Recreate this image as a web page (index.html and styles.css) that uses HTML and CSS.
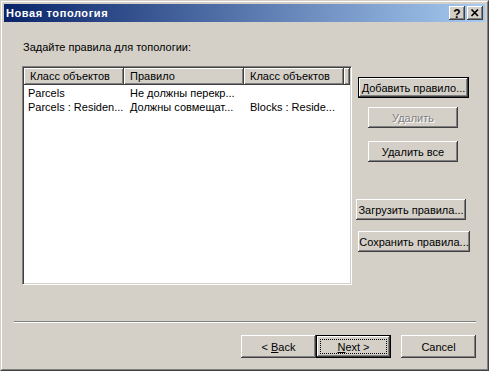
FILE: index.html
```html
<!DOCTYPE html>
<html lang="ru">
<head>
<meta charset="utf-8">
<title>Новая топология</title>
<link rel="stylesheet" href="styles.css">
</head>
<body>
<div class="window">
  <div class="frame">
    <div class="titlebar">
      <span class="title">Новая топология</span>
      <span class="capbtn help">?</span>
      <span class="capbtn close"><svg width="16" height="14" viewBox="0 0 16 14"><path d="M4.5 3.5 L11 10 M11 3.5 L4.5 10" stroke="#000" stroke-width="1.7" fill="none"/></svg></span>
    </div>
    <div class="client">
      <div class="label">Задайте правила для топологии:</div>
      <div class="main">
        <div class="listview">
          <div class="lv-header">
            <div class="hcell c1">Класс объектов</div>
            <div class="hcell c2">Правило</div>
            <div class="hcell c3">Класс объектов</div>
            <div class="hcell filler"></div>
          </div>
          <div class="lv-row">
            <div class="cell c1 first">Parcels</div>
            <div class="cell c2">Не должны перекр...</div>
            <div class="cell c3"></div>
          </div>
          <div class="lv-row">
            <div class="cell c1 first">Parcels : Residen...</div>
            <div class="cell c2">Должны совмещат...</div>
            <div class="cell c3">Blocks : Reside...</div>
          </div>
        </div>
        <div class="side">
          <div class="btn default b-add">Добавить правило...</div>
          <div class="btn disabled b-del">Удалить</div>
          <div class="btn b-delall">Удалить все</div>
          <div class="btn b-load">Загрузить правила...</div>
          <div class="btn b-save">Сохранить правила...</div>
        </div>
      </div>
      <div class="separator"></div>
      <div class="footer">
        <div class="btn wiz"><span>&lt;&nbsp;<u>B</u>ack</span></div>
        <div class="btn wiz default focus"><span class="focusrect"><span><u>N</u>ext&nbsp;&gt;</span></span></div>
        <div class="btn wiz cancel"><span>Cancel</span></div>
      </div>
    </div>
  </div>
</div>
</body>
</html>
```

FILE: styles.css
```css
html, body {
  margin: 0;
  padding: 0;
  background: #d4d0c8;
}

body {
  font-family: "Liberation Sans", Arial, sans-serif;
  font-size: 11px;
  color: #000;
}

.window {
  width: 489px;
  height: 371px;
  box-sizing: border-box;
  border: 1px solid;
  border-color: #d4d0c8 #404040 #404040 #d4d0c8;
  background: #d4d0c8;
  display: flex;
  flex-direction: column;
}

.frame {
  flex: 1;
  border: 1px solid;
  border-color: #ffffff #808080 #808080 #ffffff;
  padding: 2px;
  display: flex;
  flex-direction: column;
}

.titlebar {
  height: 18px;
  flex: none;
  background: linear-gradient(to right, #0a246a, #a6caf0);
  display: flex;
  align-items: flex-start;
  padding: 0 2px 0 2px;
}

.title {
  flex: 1;
  color: #fff;
  font-weight: bold;
  font-size: 11px;
  line-height: 18px;
  letter-spacing: 0.6px;
}

.capbtn {
  width: 16px;
  height: 14px;
  margin-top: 2px;
  box-sizing: border-box;
  background: #d4d0c8;
  box-shadow: inset -1px -1px #404040, inset 1px 1px #ffffff, inset -2px -2px #808080;
  display: flex;
  align-items: center;
  justify-content: center;
}

.capbtn.help {
  margin-right: 2px;
  font-weight: bold;
  font-size: 12px;
  line-height: 14px;
  padding-top: 1px;
}

.capbtn svg {
  display: block;
}

.client {
  flex: 1;
  margin-top: 1px;
  display: flex;
  flex-direction: column;
}

.label {
  margin: 18px 0 0 19px;
  height: 13px;
  line-height: 13px;
}

.main {
  margin-top: 12px;
  height: 219px;
  display: flex;
  flex: none;
}

.listview {
  margin-left: 18px;
  width: 330px;
  height: 219px;
  box-sizing: border-box;
  background: #fff;
  border: 1px solid;
  border-color: #808080 #ffffff #ffffff #808080;
  box-shadow: inset 1px 1px #404040, inset -1px -1px #d4d0c8;
  padding: 1px;
  overflow: hidden;
}

.lv-header {
  display: flex;
  height: 17px;
  background: #d4d0c8;
}

.hcell {
  box-sizing: border-box;
  height: 17px;
  line-height: 16px;
  padding-left: 6px;
  box-shadow: inset -1px -1px #404040, inset 1px 1px #ffffff, inset -2px -2px #808080;
  white-space: nowrap;
  overflow: hidden;
}

.c1 { width: 100px; }
.c2 { width: 120px; }
.c3 { width: 100px; }
.hcell.filler { flex: 1; }

.lv-row {
  display: flex;
  height: 14px;
  line-height: 14px;
}

.lv-header + .lv-row {
  margin-top: 1px;
}

.cell {
  box-sizing: border-box;
  padding-left: 6px;
  white-space: nowrap;
  overflow: hidden;
}

.cell.first {
  padding-left: 4px;
}

.side {
  display: flex;
  flex-direction: column;
  align-items: flex-start;
}

.btn {
  box-sizing: border-box;
  height: 21px;
  background: #d4d0c8;
  box-shadow: inset -1px -1px #404040, inset 1px 1px #ffffff, inset -2px -2px #808080;
  display: flex;
  align-items: center;
  justify-content: center;
  white-space: nowrap;
}

.btn.default {
  border: 1px solid #000;
}

.btn.disabled {
  color: #808080;
  text-shadow: 1px 1px #ffffff;
}

.b-add { margin: 11px 0 0 6px; width: 111px; }
.b-del { margin: 9px 0 0 16px; width: 90px; }
.b-delall { margin: 13px 0 0 16px; width: 90px; }
.b-load { margin: 37px 0 0 4px; width: 110px; }
.b-save { margin: 11px 0 0 6px; width: 112px; }

.separator {
  margin: 36px 0 0 10px;
  width: 462px;
  height: 1px;
  background: #808080;
  border-bottom: 1px solid #ffffff;
  flex: none;
}

.footer {
  margin-top: 12px;
  display: flex;
  padding-left: 237px;
}

.btn.wiz {
  width: 75px;
  height: 23px;
}

.btn.cancel {
  margin-left: 10px;
}

.btn.focus {
  padding: 3px;
}

.focusrect {
  flex: 1;
  align-self: stretch;
  border: 1px dotted #000;
  display: flex;
  align-items: center;
  justify-content: center;
}
```
